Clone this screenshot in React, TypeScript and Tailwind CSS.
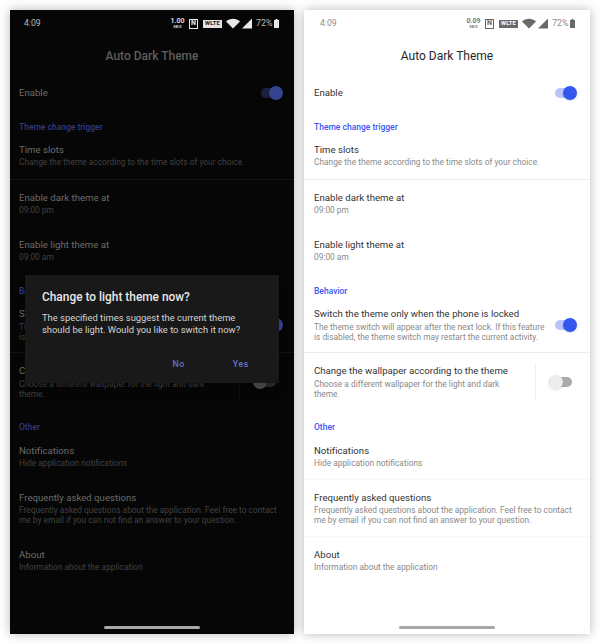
import React from "react";

type Theme = {
  panel: string; pad: string; status: string; title: string; item: string; sub: string; section: string;
  line: string; faint: string; vline: string; onTrack: string; onThumb: string; offTrack: string; offThumb: string;
  bar: string; boxBg: string; boxText: string; icon: string; speed: string; iconFill: string; time: string;
  enablePr: string; switchMr: string; offPr: string;
};

const dark: Theme = {
  panel: "w-[284px] bg-[#060606]", pad: "px-[9px]", status: "text-[#b9b9b9]", title: "font-medium text-[#5e5e5e]",
  item: "text-[#6c6c6c]", sub: "text-[#414141]", section: "text-[#303c80]", line: "border-[#141414]",
  faint: "border-[#0a0a0a]", vline: "border-[#0d0d0d]", onTrack: "bg-[#1c2040]", onThumb: "bg-[#34438f]",
  offTrack: "bg-[#2a2a2a]", offThumb: "bg-[#4a4a4a]", bar: "bg-[#a8a8a8]", boxBg: "bg-[#e4e4e4]",
  boxText: "text-[#222222]", icon: "text-[#e8e8e8]", speed: "text-[#d8d8d8]", iconFill: "#e8e8e8", time: "ml-[14px]",
  enablePr: "pr-[10px]", switchMr: "mr-[1px]", offPr: "pr-[4px]",
};

const light: Theme = {
  panel: "w-[286px] bg-white", pad: "px-[10px]", status: "text-[#8d8d8d]", title: "text-[#272727]",
  item: "text-[#333333]", sub: "text-[#8a8a8a]", section: "text-[#3a55f5]", line: "border-[#ececec]",
  faint: "border-[#f8f8f8]", vline: "border-[#f0f0f0]", onTrack: "bg-[#b9c5fb]", onThumb: "bg-[#3357f0]",
  offTrack: "bg-[#ababab]", offThumb: "bg-[#ececec]", bar: "bg-[#a8a8a8]", boxBg: "bg-[#6a6a6a]",
  boxText: "text-white", icon: "text-[#666666]", speed: "text-[#777777]", iconFill: "#6a6a6a", time: "ml-[16px]",
  enablePr: "pr-[12px]", switchMr: "mr-[2px]", offPr: "pr-[3px]",
};

function Toggle({ t, on }: { t: Theme; on: boolean }) {
  return (
    <div className="relative h-[14px] w-[28px] shrink-0">
      <div className={`absolute top-[2px] h-[10px] rounded-full ${on ? `left-[5px] w-[20px] ${t.onTrack}` : `left-0 w-[23px] ${t.offTrack}`}`} />
      <div className={`absolute top-0 h-[14px] w-[14px] rounded-full shadow-sm ${on ? `left-[13px] ${t.onThumb}` : `left-0 ${t.offThumb}`}`} />
    </div>
  );
}

function Item({ t, title, sub, height, border, right, subGap }: { t: Theme; title: string; sub: string[]; height: string; border?: string; right?: React.ReactNode; subGap?: string }) {
  return (
    <div className={`flex items-start ${height} ${t.pad} pt-[11px] ${border ? `border-b ${border}` : ""}`}>
      <div className="min-w-0 flex-1">
        <div className={`h-[14px] whitespace-nowrap text-[9.6px] leading-[14px] tracking-[0.02px] ${t.item}`}>{title}</div>
        <div className={subGap}>
          {sub.map((s) => (
            <div key={s} className={`h-[10px] whitespace-nowrap text-[8.35px] leading-[10px] ${t.sub}`}>{s}</div>
          ))}
        </div>
      </div>
      {right}
    </div>
  );
}

function Section({ t, children, mt }: { t: Theme; children: string; mt: string }) {
  return <div className={`${mt} h-[10px] ${t.pad} text-[8.5px] font-medium leading-[10px] ${t.section}`}>{children}</div>;
}

function StatusBar({ t, speed }: { t: Theme; speed: string }) {
  return (
    <div className={`flex h-[26px] items-center pt-[1px] ${t.status}`}>
      <span className={`${t.time} text-[8.6px] leading-none`}>4:09</span>
      <div className="ml-auto mr-[15px] flex items-center">
        <div className={`flex w-[13px] flex-col items-center ${t.speed}`}>
          <span className="text-[7px] font-bold leading-[7px]">{speed}</span>
          <span className="text-[3.6px] font-bold leading-[4px]">KB/S</span>
        </div>
        <div className={`ml-[5px] flex h-[10px] w-[9px] items-center justify-center border ${t.icon} border-current text-[7px] font-bold leading-none`}>N</div>
        <div className={`ml-[5px] flex h-[8px] w-[19px] items-center justify-center ${t.boxBg} ${t.boxText} text-[5.8px] font-bold leading-none tracking-[0.1px]`}>WLTE</div>
        <svg className="ml-[4px]" width="14" height="11" viewBox="0 0 14 11">
          <path d="M0 3.4 C3.8 0 10.2 0 14 3.4 L7 10.5 Z" fill={t.iconFill} />
        </svg>
        <svg className="ml-[2px]" width="10" height="11" viewBox="0 0 10 11">
          <path d="M10 0.5 V10.5 H0 Z" fill={t.iconFill} />
        </svg>
        <span className="ml-[4px] w-[17px] text-[8.8px] leading-none">72%</span>
        <svg className="ml-[1px]" width="5" height="9" viewBox="0 0 5 9">
          <path d="M1.5 0 H3.5 V1 H5 V9 H0 V1 H1.5 Z" fill={t.iconFill} />
        </svg>
      </div>
    </div>
  );
}

function Screen({ t, speed, children }: { t: Theme; speed: string; children?: React.ReactNode }) {
  return (
    <div className={`relative h-[624px] shrink-0 shadow-[0_0_10px_rgba(0,0,0,0.28)] ${t.panel}`}>
      <StatusBar t={t} speed={speed} />
      <div className={`flex h-[39px] items-center justify-center text-[12px] leading-none ${t.title}`}>Auto Dark Theme</div>
      <div className={`flex h-[36px] items-center justify-between ${t.pad} ${t.enablePr}`}>
        <span className={`text-[9.6px] leading-none ${t.item}`}>Enable</span>
        <Toggle t={t} on />
      </div>
      <Section t={t} mt="mt-[11px]">Theme change trigger</Section>
      <Item t={t} height="h-[48px]" title="Time slots" sub={["Change the theme according to the time slots of your choice."]} border={t.line} />
      <Item t={t} height="h-[47px]" title="Enable dark theme at" sub={["09:00 pm"]} />
      <Item t={t} height="h-[47px]" title="Enable light theme at" sub={["09:00 am"]} />
      <Section t={t} mt="mt-[12px]">Behavior</Section>
      <Item
        t={t}
        height="h-[57px]"
        border={t.line}
        subGap="mt-[1px]"
        title="Switch the theme only when the phone is locked"
        sub={["The theme switch will appear after the next lock. If this feature", "is disabled, the theme switch may restart the current activity."]}
        right={<div className={`${t.switchMr} mt-[11px]`}><Toggle t={t} on /></div>}
      />
      <Item
        t={t}
        height="h-[57px]"
        subGap="mt-[1px]"
        title="Change the wallpaper according to the theme"
        sub={["Choose a different wallpaper for the light and dark", "theme."]}
        right={
          <div className={`-mt-[1px] flex h-[38px] items-center border-l pl-[13px] ${t.offPr} ${t.vline}`}>
            <Toggle t={t} on={false} />
          </div>
        }
      />
      <Section t={t} mt="mt-[12px]">Other</Section>
      <div className="h-[1px]" />
      <Item t={t} height="h-[47px]" title="Notifications" sub={["Hide application notifications"]} border={t.faint} />
      <Item t={t} height="h-[57px]" title="Frequently asked questions" sub={["Frequently asked questions about the application. Feel free to contact", "me by email if you can not find an answer to your question."]} border={t.faint} />
      <Item t={t} height="h-[47px]" title="About" sub={["Information about the application"]} />
      <div className={`absolute bottom-[5px] left-1/2 h-[3px] w-[96px] -translate-x-1/2 rounded-full ${t.bar}`} />
      {children}
    </div>
  );
}

export default function App() {
  return (
    <div className="flex h-[644px] w-[600px] gap-[10px] bg-white py-[10px] pl-[10px] font-['Roboto',sans-serif]">
      <Screen t={dark} speed="1.00">
        <div className="absolute left-[15px] top-[265px] h-[108px] w-[254px] bg-[#191919] pl-[17px] pr-[10px] pt-[13px] shadow-lg">
          <div className="text-[11.9px] font-medium leading-[18px] text-[#e8e8e8]">Change to light theme now?</div>
          <div className="mt-[6px] text-[9.4px] leading-[11.5px] text-[#d4d4d4]">
            <div className="whitespace-nowrap">The specified times suggest the current theme</div>
            <div className="whitespace-nowrap">should be light. Would you like to switch it now?</div>
          </div>
          <div className="mt-[23px] flex justify-end gap-[48px] pr-[20px] text-[8.8px] font-medium leading-[12px] tracking-[0.6px] text-[#6471cf]">
            <span>No</span>
            <span>Yes</span>
          </div>
        </div>
      </Screen>
      <Screen t={light} speed="0.09" />
    </div>
  );
}
